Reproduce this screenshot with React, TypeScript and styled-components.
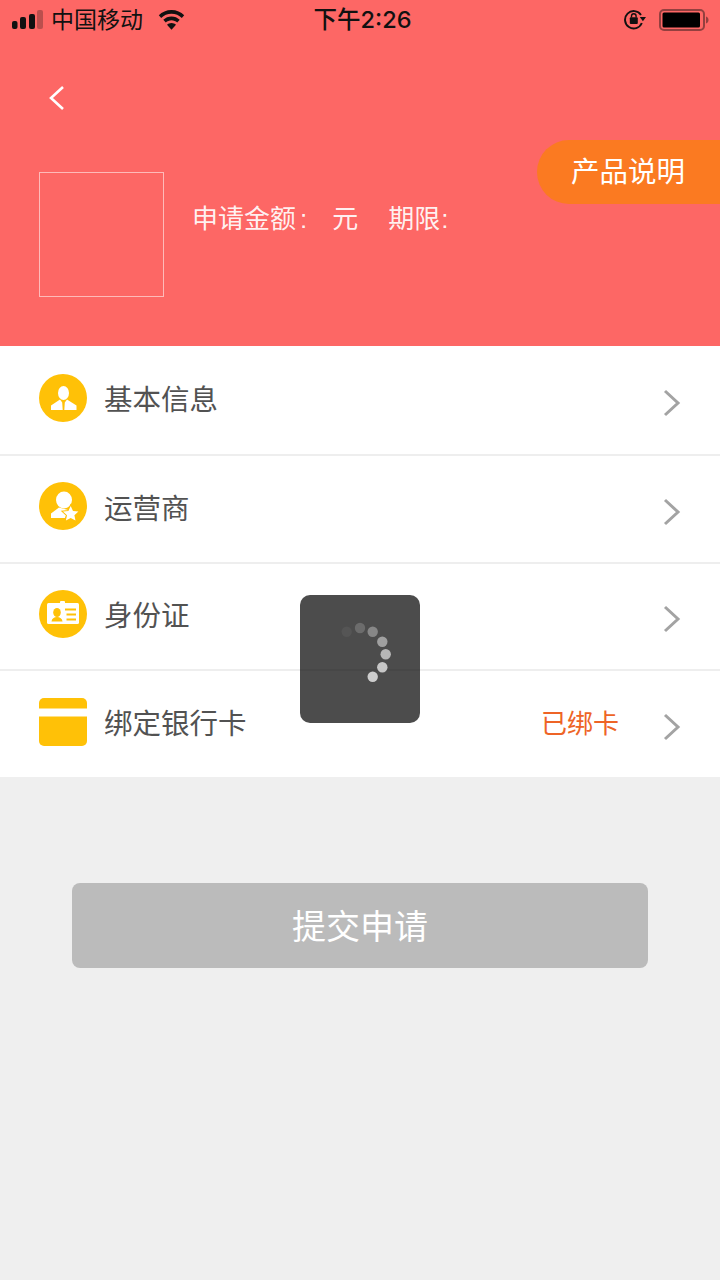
import React from "react";
import { createGlobalStyle, styled } from "styled-components";

const GlobalStyle = createGlobalStyle`
  html, body {
    margin: 0;
    padding: 0;
    background: #efefef;
  }
  * {
    box-sizing: border-box;
  }
`;

const FONT = `"Liberation Sans", "Noto Sans CJK SC", sans-serif`;

const Page = styled.div`
  position: relative;
  width: 720px;
  height: 1280px;
  overflow: hidden;
  background: #efefef;
  font-family: ${FONT};
`;

const Header = styled.header`
  height: 346px;
  background: #fd6765;
  display: flex;
  flex-direction: column;
`;

const StatusBar = styled.div`
  height: 40px;
  padding: 0 11px 0 12px;
  display: grid;
  grid-template-columns: 1fr auto 1fr;
  align-items: center;
  color: #111;
`;

const StatusLeft = styled.div`
  display: flex;
  align-items: center;
`;

const Carrier = styled.span`
  margin-left: 8px;
  font-size: 23px;
  line-height: 40px;
`;

const WifiIcon = styled.svg`
  margin-left: 15px;
  display: block;
`;

const Clock = styled.span`
  margin-left: 4px;
  font-family: Inter, "Noto Sans CJK SC", sans-serif;
  font-size: 23.5px;
  font-weight: 500;
  line-height: 40px;
`;

const StatusRight = styled.div`
  display: flex;
  align-items: center;
  justify-content: flex-end;
  gap: 13px;
`;

const BackButton = styled.button`
  margin: 44px 0 0 47px;
  width: 20px;
  height: 28px;
  padding: 0;
  border: 0;
  background: none;
  display: block;
`;

const Summary = styled.div`
  margin: 60px 0 0 39px;
  display: flex;
  align-items: flex-start;
`;

const Thumb = styled.div`
  width: 125px;
  height: 125px;
  border: 1px solid rgba(255, 255, 255, 0.55);
`;

const Terms = styled.div`
  margin: 30px 0 0 28px;
  display: flex;
  color: rgba(255, 255, 255, 0.92);
  font-size: 26px;
  line-height: 34px;
`;

const TermItem = styled.span<{ $gap: number }>`
  margin-right: ${({ $gap }) => $gap}px;
  white-space: pre;
`;

const TermColon = styled.span<{ $offset: number }>`
  margin-left: ${({ $offset }) => $offset}px;
`;

const ProductButton = styled.button`
  position: absolute;
  top: 140px;
  right: 0;
  width: 183px;
  height: 64px;
  padding: 0 0 6px 34px;
  border: 0;
  border-radius: 32px 0 0 32px;
  background: #fb7a21;
  color: #fff;
  font-family: ${FONT};
  font-size: 28.5px;
  text-align: left;
`;

const List = styled.ul`
  margin: 0;
  padding: 0;
  list-style: none;
  background: #fff;
`;

const Row = styled.li<{ $height: number }>`
  height: ${({ $height }) => $height}px;
  padding: 0 39px;
  display: flex;
  align-items: center;
  border-bottom: 2px solid #eeeeee;
  &:last-child {
    border-bottom: 0;
  }
`;

const IconSlot = styled.div`
  width: 48px;
  height: 48px;
  margin-bottom: 5px;
  flex: none;
  svg {
    display: block;
  }
`;

const RowLabel = styled.span`
  margin-left: 17px;
  flex: 1;
  color: #525252;
  font-size: 28.5px;
  line-height: 40px;
`;

const RowValue = styled.span`
  margin-right: 44px;
  color: #ee6426;
  font-size: 26px;
  line-height: 40px;
`;

const Chevron = styled.svg`
  display: block;
  flex: none;
  margin-top: 6px;
`;

const Footer = styled.div`
  padding: 106px 72px 0;
`;

const SubmitButton = styled.button`
  width: 100%;
  height: 85px;
  padding: 0 0 2px;
  border: 0;
  border-radius: 8px;
  background: #bbbbbb;
  color: #fff;
  font-family: ${FONT};
  font-size: 34px;
`;

const Toast = styled.div`
  position: absolute;
  left: 300px;
  top: 595px;
  width: 120px;
  height: 128px;
  border-radius: 10px;
  background: rgba(0, 0, 0, 0.7);
  display: flex;
  align-items: center;
  justify-content: center;
`;

const AMBER = "#ffc107";

const SignalIcon = () => (
  <svg width="31" height="20" viewBox="0 0 31 20" fill="#111">
    <rect x="0" y="11" width="5.5" height="8" rx="2" />
    <rect x="8" y="7" width="6" height="12" rx="2" />
    <rect x="17" y="4" width="6" height="15" rx="2" />
    <rect x="25" y="0" width="6" height="19" rx="2" fill="#111" fillOpacity="0.28" />
  </svg>
);

const Wifi = () => (
  <WifiIcon width="27" height="20" viewBox="0 0 27 20" fill="#111">
    <path d="M13.5 0C8.5 0 4 2 .8 5.200L3.200 8C5.800 5.300 9.500 3.800 13.500 3.800s7.700 1.500 10.300 4.200l2.400-2.800C23 2 18.500 0 13.500 0z" />
    <path d="M13.500 6.500c-3.200 0-6 1.200-8.200 3.300l2.500 2.800c1.500-1.400 3.500-2.300 5.700-2.300s4.200.9 5.700 2.300l2.500-2.800C19.500 7.700 16.700 6.500 13.500 6.500z" />
    <path d="M13.500 13c-1.800 0-3.400.7-4.500 1.800l4.500 5 4.500-5C16.900 13.700 15.300 13 13.500 13z" />
  </WifiIcon>
);

const RotationLock = () => (
  <svg width="22" height="22" viewBox="0 0 22 22">
    <path d="M17 6A8.700 8.700 0 1 0 17.800 14" fill="none" stroke="#111" strokeWidth="1.900" />
    <path d="M15.800 8h6.200l-3.100 4.200z" fill="#111" />
    <rect x="5.800" y="8.300" width="8" height="6.700" rx="1" fill="#111" />
    <path d="M7.500 8.500V7a2.300 2.300 0 0 1 4.600 0v1.500" fill="none" stroke="#111" strokeWidth="1.400" />
  </svg>
);

const Battery = () => (
  <svg width="50" height="22" viewBox="0 0 50 22">
    <rect x="1" y="1" width="44" height="20" rx="4" fill="none" stroke="#111" strokeOpacity="0.45" strokeWidth="2" />
    <rect x="3.500" y="3.500" width="37.500" height="15" rx="1.500" fill="#000" />
    <path d="M47 7.500c1.500.4 2.500 1.700 2.500 3.500s-1 3.100-2.500 3.500z" fill="#111" fillOpacity="0.45" />
  </svg>
);

const BackIcon = () => (
  <svg width="20" height="28" viewBox="0 0 20 28">
    <path d="M16 3 4 14l12 11" fill="none" stroke="#fff" strokeWidth="2.600" />
  </svg>
);

const RowChevron = () => (
  <Chevron width="18" height="28" viewBox="0 0 18 28">
    <path d="M2 2l13 12L2 26" fill="none" stroke="#a3a3a3" strokeWidth="3" />
  </Chevron>
);

const ProfileIcon = () => (
  <svg width="48" height="48" viewBox="0 0 48 48">
    <circle cx="24" cy="24" r="24" fill={AMBER} />
    <ellipse cx="24.500" cy="19" rx="5.500" ry="7" fill="#fff" />
    <path d="M21 25.500 12 31.500v4.500h11.700l-.5-7.500zM28 25.500l9.500 6v4.500H25.300l.5-7.500z" fill="#fff" />
  </svg>
);

const CarrierIcon = () => (
  <svg width="48" height="48" viewBox="0 0 48 48">
    <circle cx="24" cy="24" r="24" fill={AMBER} />
    <ellipse cx="25" cy="18" rx="8" ry="8.500" fill="#fff" />
    <path d="M20 25.500 12 31.500v4.500h14l3-8z" fill="#fff" />
    <path
      d="m31.700 24 2.300 5 5.400.6-4 3.700 1.100 5.300-4.800-2.700-4.800 2.700 1.100-5.300-4-3.700 5.400-.6z"
      fill="#fff"
      stroke={AMBER}
      strokeWidth="2"
      paintOrder="stroke"
    />
  </svg>
);

const IdCardIcon = () => (
  <svg width="48" height="48" viewBox="0 0 48 48">
    <circle cx="24" cy="24" r="24" fill={AMBER} />
    <rect x="8" y="13" width="32" height="21" rx="1.500" fill="#fff" />
    <rect x="21" y="11" width="5" height="4" rx="1" fill="#fff" />
    <ellipse cx="18" cy="22.500" rx="3.800" ry="4.500" fill={AMBER} />
    <path d="M12.500 31.500c.3-3 2.500-4.500 5.500-4.500s5.200 1.500 5.500 4.500z" fill={AMBER} />
    <path d="M26 18.500h11v2H26zM27.500 23.500H37v2h-9.500zM27.500 28.500H37v2h-9.500z" fill={AMBER} />
  </svg>
);

const BankCardIcon = () => (
  <svg width="48" height="48" viewBox="0 0 48 48">
    <path d="M5 0h38a5 5 0 0 1 5 5v5.500H0V5a5 5 0 0 1 5-5z" fill={AMBER} />
    <path d="M0 18.500h48V43a5 5 0 0 1-5 5H5a5 5 0 0 1-5-5z" fill={AMBER} />
  </svg>
);

const SPINNER_DOTS = [
  { cx: 26.700, cy: 22.700, o: 0.05 },
  { cx: 40, cy: 19, o: 0.18 },
  { cx: 52.700, cy: 22.700, o: 0.33 },
  { cx: 62.300, cy: 32.700, o: 0.47 },
  { cx: 65.700, cy: 45.300, o: 0.6 },
  { cx: 62.300, cy: 58.300, o: 0.69 },
  { cx: 52.700, cy: 67.700, o: 0.72 },
];

const Spinner = () => (
  <svg width="80" height="100" viewBox="0 0 80 100">
    {SPINNER_DOTS.map((dot) => (
      <circle key={dot.cx + "-" + dot.cy} cx={dot.cx} cy={dot.cy} r="5.200" fill="#fff" fillOpacity={dot.o} />
    ))}
  </svg>
);

const ROWS = [
  { label: "基本信息", icon: <ProfileIcon />, height: 110 },
  { label: "运营商", icon: <CarrierIcon />, height: 107.5 },
  { label: "身份证", icon: <IdCardIcon />, height: 107.5 },
  { label: "绑定银行卡", icon: <BankCardIcon />, value: "已绑卡", height: 106 },
];

export default function App() {
  return (
    <Page>
      <GlobalStyle />
      <Header>
        <StatusBar>
          <StatusLeft>
            <SignalIcon />
            <Carrier>中国移动</Carrier>
            <Wifi />
          </StatusLeft>
          <Clock>下午2:26</Clock>
          <StatusRight>
            <RotationLock />
            <Battery />
          </StatusRight>
        </StatusBar>
        <BackButton aria-label="返回">
          <BackIcon />
        </BackButton>
        <Summary>
          <Thumb />
          <Terms>
            <TermItem $gap={25}>
              申请金额<TermColon $offset={4}>:</TermColon>
            </TermItem>
            <TermItem $gap={30}>元</TermItem>
            <TermItem $gap={0}>
              期限<TermColon $offset={1}>:</TermColon>
            </TermItem>
          </Terms>
        </Summary>
      </Header>
      <ProductButton>产品说明</ProductButton>
      <List>
        {ROWS.map((row) => (
          <Row key={row.label} $height={row.height}>
            <IconSlot>{row.icon}</IconSlot>
            <RowLabel>{row.label}</RowLabel>
            {row.value && <RowValue>{row.value}</RowValue>}
            <RowChevron />
          </Row>
        ))}
      </List>
      <Footer>
        <SubmitButton>提交申请</SubmitButton>
      </Footer>
      <Toast>
        <Spinner />
      </Toast>
    </Page>
  );
}
